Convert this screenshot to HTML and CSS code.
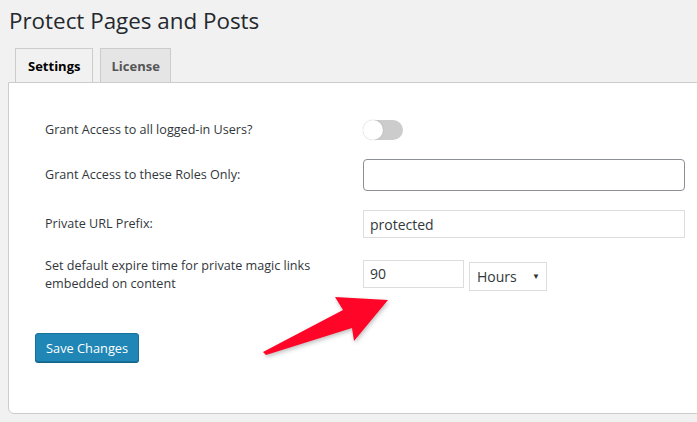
FILE: index.html
```html
<!DOCTYPE html>
<html lang="en">
<head>
    <meta charset="UTF-8">
    <meta name="viewport" content="width=device-width, initial-scale=1.0">
    <title>Protect Pages and Posts</title>
    <link rel="stylesheet" href="styles.css">
</head>
<body>
    <div class="wrap">
        <h1 class="page-title">Protect Pages and Posts</h1>

        <div class="tabs">
            <a href="#" class="tab active">Settings</a>
            <a href="#" class="tab">License</a>
        </div>

        <div class="panel">
            <div class="form-grid">
                <label class="field-label">Grant Access to all logged-in Users?</label>
                <div class="field">
                    <span class="toggle"><span class="knob"></span></span>
                </div>

                <label class="field-label">Grant Access to these Roles Only:</label>
                <div class="field">
                    <input type="text" class="roles-input">
                </div>

                <label class="field-label">Private URL Prefix:</label>
                <div class="field">
                    <input type="text" class="text-input" value="protected">
                </div>

                <label class="field-label">Set default expire time for private magic links embedded on content</label>
                <div class="field expire">
                    <input type="text" class="num-input" value="90">
                    <span class="select-wrap">
                        <select class="unit-select">
                            <option>Hours</option>
                            <option>Days</option>
                        </select>
                    </span>
                </div>
            </div>

            <button class="save-btn">Save Changes</button>
        </div>
    </div>

    <svg class="arrow" width="697" height="422" viewBox="0 0 697 422">
        <polygon points="263,352 343,310 335,297 388,300 354,341 352,328 266,355" fill="#ff0628"/>
    </svg>
</body>
</html>
```

FILE: styles.css
```css
body{
    margin: 0;
    background-color: #f1f1f1;
    font-family: "Open Sans", "Noto Sans", sans-serif;
    color: #32373c;
    overflow: hidden;
}
.wrap{
    padding-left: 8px;
    margin-right: -20px;
}
.page-title{
    margin: 0;
    padding: 6px 0 0 1px;
    font-size: 22.4px;
    font-weight: 400;
    line-height: 29px;
    color: #23282d;
}
.tabs{
    display: flex;
    gap: 7px;
    margin-top: 13px;
    padding-left: 7px;
}
.tab{
    display: block;
    height: 34px;
    box-sizing: border-box;
    padding: 0 12px;
    border: 1px solid #ccc;
    border-bottom: none;
    background-color: #e5e5e5;
    color: #555;
    font-size: 13px;
    font-weight: 700;
    line-height: 34px;
    text-decoration: none;
}
.tab.active{
    background-color: #f1f1f1;
    color: #000;
}
.tab + .tab{
    padding: 0 10px;
}
.panel{
    background-color: #fff;
    border: 1px solid #ccc;
    border-radius: 0 0 0 6px;
    padding: 37px 0 51px 26px;
}
.form-grid{
    display: grid;
    grid-template-columns: 328px 1fr;
    row-gap: 19px;
    align-items: center;
}
.field-label{
    padding: 0 30px 0 10px;
    font-size: 12.6px;
    line-height: 18px;
    color: #32373c;
}
.field{
    display: flex;
    align-items: center;
    gap: 5px;
}
.toggle{
    position: relative;
    display: block;
    width: 40px;
    height: 20px;
    border-radius: 10px;
    background-color: #ccc;
}
.knob{
    position: absolute;
    left: 0;
    top: 0;
    width: 20px;
    height: 20px;
    border-radius: 50%;
    background-color: #fff;
    box-shadow: 0 0 2px rgba(0,0,0,0.15);
}
input{
    font-family: inherit;
    box-sizing: border-box;
    margin: 0;
    outline: none;
}
.roles-input{
    width: 322px;
    height: 32px;
    border: 1px solid #8c8f94;
    border-radius: 4px;
}
.text-input{
    width: 322px;
    height: 28px;
    border: 1px solid #ddd;
    padding: 0 6px;
    font-size: 14px;
    color: #32373c;
}
.expire{
    align-items: flex-start;
}
.num-input{
    width: 101px;
    height: 28px;
    border: 1px solid #ddd;
    padding: 0 6px;
    font-size: 14px;
    color: #32373c;
}
.select-wrap{
    position: relative;
    display: block;
    margin-top: 2px;
}
.select-wrap::after{
    content: "\25BC";
    position: absolute;
    right: 7px;
    top: 8px;
    font-size: 8px;
    color: #333;
    pointer-events: none;
}
.unit-select{
    appearance: none;
    -webkit-appearance: none;
    display: block;
    width: 78px;
    height: 29px;
    margin: 0;
    border: 1px solid #ddd;
    border-radius: 0;
    background-color: #fff;
    padding: 0 7px;
    font-family: inherit;
    font-size: 14px;
    color: #32373c;
}
.save-btn{
    display: block;
    margin-top: 40px;
    height: 29px;
    padding: 0 10px;
    background-color: #1f86b5;
    border: 1px solid #17729b;
    border-radius: 3px;
    box-shadow: 0 1px 0 #146488;
    color: #fff;
    font-family: inherit;
    font-size: 12.8px;
}
.arrow{
    position: absolute;
    left: 0;
    top: 0;
    pointer-events: none;
    filter: drop-shadow(1px 2px 2px rgba(0,0,0,0.25));
}
```
